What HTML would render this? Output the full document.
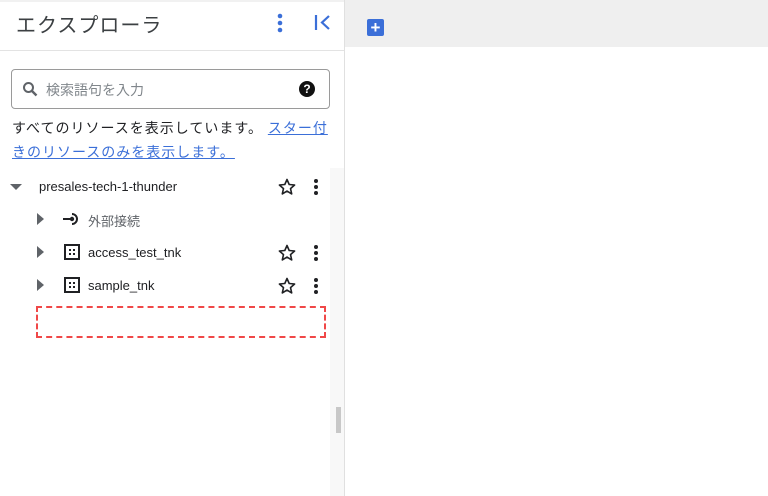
<!DOCTYPE html>
<html><head><meta charset="utf-8"><style>
*{margin:0;padding:0;box-sizing:border-box}
body{width:768px;height:496px;overflow:hidden;background:#fff;font-family:"Liberation Sans","Noto Sans CJK JP",sans-serif;position:relative;color:#202124}
.a{position:absolute}
</style></head><body>
<div class="a" style="left:0;top:0;width:768px;height:2px;background:#f1f1f1"></div>
<div class="a" style="left:16px;top:9px;font-size:20px;color:#3c4043;letter-spacing:1px">エクスプローラ</div>
<svg class="a" style="left:274px;top:12px" width="12" height="22"><circle cx="6" cy="4" r="2.3" fill="#3b6fd8"/><circle cx="6" cy="11" r="2.3" fill="#3b6fd8"/><circle cx="6" cy="18" r="2.3" fill="#3b6fd8"/></svg>
<svg class="a" style="left:313px;top:13px" width="20" height="20"><path d="M3 2v15" stroke="#3b6fd8" stroke-width="2.2"/><path d="M16 3l-7 6.5 7 6.5" stroke="#3b6fd8" stroke-width="2.2" fill="none"/></svg>
<div class="a" style="left:0;top:50px;width:344px;height:1px;background:#e3e3e3"></div>
<div class="a" style="left:344px;top:0;width:1px;height:496px;background:#e0e0e0"></div>
<div class="a" style="left:345px;top:0;width:423px;height:47px;background:#efefef"></div>
<div class="a" style="left:367px;top:19px;width:17px;height:17px;background:#3b6fd8;border-radius:2px;color:#fff;font-weight:bold;font-size:17px;line-height:17px;text-align:center">+</div>
<div class="a" style="left:330px;top:168px;width:14px;height:328px;background:#f8f8f8"></div>
<div class="a" style="left:336px;top:407px;width:5px;height:26px;background:#c8c8c8"></div>
<div class="a" style="left:11px;top:69px;width:319px;height:40px;border:1px solid #9a9a9a;border-radius:4px"></div>
<svg class="a" style="left:22px;top:81px" width="16" height="16"><circle cx="6.5" cy="6.5" r="4.5" stroke="#5f6368" stroke-width="2" fill="none"/><path d="M10 10l4.5 4.5" stroke="#5f6368" stroke-width="2.4"/></svg>
<div class="a" style="left:46px;top:80px;font-size:14px;color:#80868b">検索語句を入力</div>
<div class="a" style="left:299px;top:81px;width:16px;height:16px;border-radius:50%;background:#111;color:#fff;font-size:12px;font-weight:bold;line-height:16px;text-align:center">?</div>
<div class="a" style="left:12px;top:116px;font-size:14px;line-height:24px;width:340px;color:#202124;letter-spacing:1px;white-space:nowrap">すべてのリソースを表示しています。 <span style="color:#3b6fd8;text-decoration:underline">スター付<br>きのリソースのみを表示します。</span></div>
<svg class="a" style="left:9px;top:182px" width="14" height="10"><path d="M1 2h12l-6 6z" fill="#5f6368"/></svg>
<div class="a" style="left:39px;top:179px;font-size:13px">presales-tech-1-thunder</div>
<svg class="a" style="left:36px;top:211px" width="10" height="16"><path d="M1 2l7 6-7 6z" fill="#5f6368"/></svg>
<svg class="a" style="left:36px;top:244px" width="10" height="16"><path d="M1 2l7 6-7 6z" fill="#5f6368"/></svg>
<svg class="a" style="left:36px;top:277px" width="10" height="16"><path d="M1 2l7 6-7 6z" fill="#5f6368"/></svg>
<svg class="a" style="left:63px;top:211px" width="18" height="16"><path d="M0 8h9" stroke="#202124" stroke-width="2"/><path d="M9 3a5 5 0 1 1 0 10" stroke="#202124" stroke-width="2" fill="none"/><circle cx="9" cy="8" r="2.2" fill="#202124"/></svg>
<div class="a" style="left:88px;top:211px;font-size:13px;color:#5f6368">外部接続</div>
<svg class="a" style="left:64px;top:244px" width="16" height="16"><rect x="1" y="1" width="14" height="14" fill="none" stroke="#202124" stroke-width="2"/><rect x="5" y="5" width="2" height="2" fill="#202124"/><rect x="9" y="5" width="2" height="2" fill="#202124"/><rect x="5" y="9" width="2" height="2" fill="#202124"/><rect x="9" y="9" width="2" height="2" fill="#202124"/></svg>
<svg class="a" style="left:64px;top:277px" width="16" height="16"><rect x="1" y="1" width="14" height="14" fill="none" stroke="#202124" stroke-width="2"/><rect x="5" y="5" width="2" height="2" fill="#202124"/><rect x="9" y="5" width="2" height="2" fill="#202124"/><rect x="5" y="9" width="2" height="2" fill="#202124"/><rect x="9" y="9" width="2" height="2" fill="#202124"/></svg>
<div class="a" style="left:88px;top:245px;font-size:13px">access_test_tnk</div>
<div class="a" style="left:88px;top:278px;font-size:13px">sample_tnk</div>
<svg class="a" style="left:277px;top:177px" width="20" height="20"><path d="M10 2.5l2.2 5 5.4.5-4.1 3.6 1.2 5.3L10 14.1l-4.7 2.8 1.2-5.3L2.4 8l5.4-.5z" fill="none" stroke="#202124" stroke-width="1.6" stroke-linejoin="round"/></svg>
<svg class="a" style="left:277px;top:243px" width="20" height="20"><path d="M10 2.5l2.2 5 5.4.5-4.1 3.6 1.2 5.3L10 14.1l-4.7 2.8 1.2-5.3L2.4 8l5.4-.5z" fill="none" stroke="#202124" stroke-width="1.6" stroke-linejoin="round"/></svg>
<svg class="a" style="left:277px;top:276px" width="20" height="20"><path d="M10 2.5l2.2 5 5.4.5-4.1 3.6 1.2 5.3L10 14.1l-4.7 2.8 1.2-5.3L2.4 8l5.4-.5z" fill="none" stroke="#202124" stroke-width="1.6" stroke-linejoin="round"/></svg>
<svg class="a" style="left:311px;top:177px" width="10" height="20"><circle cx="5" cy="4" r="2" fill="#202124"/><circle cx="5" cy="10" r="2" fill="#202124"/><circle cx="5" cy="16" r="2" fill="#202124"/></svg>
<svg class="a" style="left:311px;top:243px" width="10" height="20"><circle cx="5" cy="4" r="2" fill="#202124"/><circle cx="5" cy="10" r="2" fill="#202124"/><circle cx="5" cy="16" r="2" fill="#202124"/></svg>
<svg class="a" style="left:311px;top:276px" width="10" height="20"><circle cx="5" cy="4" r="2" fill="#202124"/><circle cx="5" cy="10" r="2" fill="#202124"/><circle cx="5" cy="16" r="2" fill="#202124"/></svg>
<div class="a" style="left:36px;top:306px;width:290px;height:32px;border:2px dashed #f04848"></div>
</body></html>
